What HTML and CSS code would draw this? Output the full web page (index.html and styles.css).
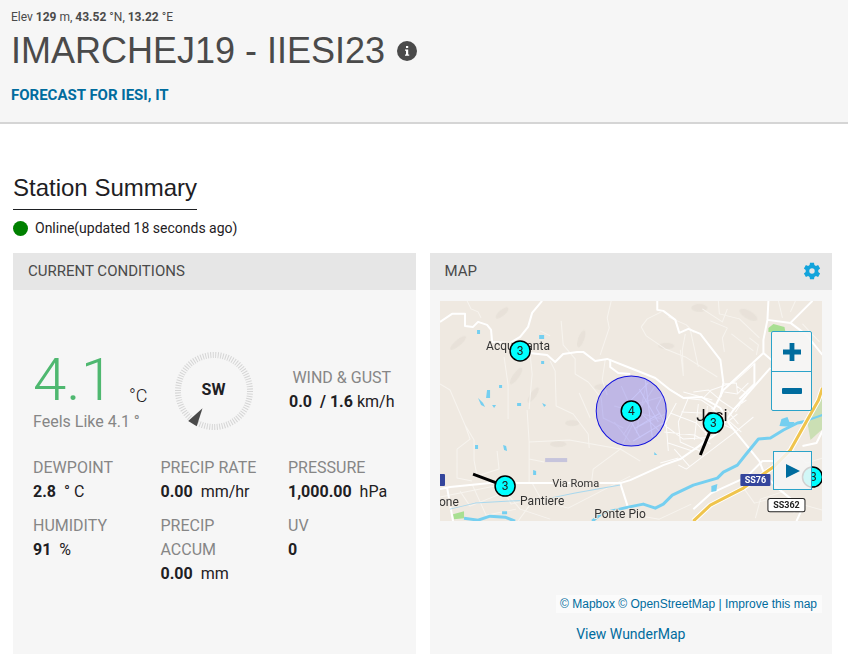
FILE: index.html
```html
<!DOCTYPE html>
<html lang="en">
<head>
<meta charset="utf-8">
<meta name="viewport" content="width=device-width, initial-scale=1">
<title>IMARCHEJ19 - IIESI23</title>
<link rel="stylesheet" href="styles.css">
</head>
<body>
<header class="station-header">
  <p class="coords">Elev <b>129</b> m, <b>43.52</b> °N, <b>13.22</b> °E</p>
  <div class="title-row">
    <h1>IMARCHEJ19 - IIESI23</h1>
    <button class="info" type="button" aria-label="Station information">
      <svg viewBox="0 0 20 20" width="20" height="20"><circle cx="10" cy="10" r="10" fill="#4a4a4a"/><path d="M9 5h2.200v2H9zM8 8.400h3.200v5h1v1.400H8v-1.400h1V9.800H8z" fill="#fff"/></svg>
    </button>
  </div>
  <a class="forecast" href="#">FORECAST FOR IESI, IT</a>
</header>
<main>
  <h2>Station Summary</h2>
  <p class="status"><span class="dot"></span>Online(updated 18 seconds ago)</p>
  <div class="panels">
    <section class="panel">
      <header class="panel-head"><h3>CURRENT CONDITIONS</h3></header>
      <div class="conditions">
        <div class="now">
          <div class="reading"><span class="temp">4.1</span><span class="unit">°C</span></div>
          <p class="feels">Feels Like 4.1 °</p>
        </div>
        <div class="compass">
          <svg viewBox="-40 -40 80 80" width="80" height="80">
            <circle r="36" fill="none" stroke="#d5d5d5" stroke-width="6" pathLength="180" stroke-dasharray="0.8 1.2"/>
            <path d="M-11.5 17.3L-25.8 30L-17.3 35.2Z" fill="#4a4a4a"/>
          </svg>
          <b class="direction">SW</b>
        </div>
        <div class="wind">
          <div class="label">WIND &amp; GUST</div>
          <div class="value"><b>0.0 &nbsp;/ 1.6</b> km/h</div>
        </div>
        <div class="metric"><div class="label">DEWPOINT</div><div class="value"><b>2.8</b> &nbsp;° C</div></div>
        <div class="metric"><div class="label">PRECIP RATE</div><div class="value"><b>0.00</b> &nbsp;mm/hr</div></div>
        <div class="metric"><div class="label">PRESSURE</div><div class="value"><b>1,000.00</b> &nbsp;hPa</div></div>
        <div class="metric"><div class="label">HUMIDITY</div><div class="value"><b>91</b> &nbsp;%</div></div>
        <div class="metric"><div class="label narrow">PRECIP ACCUM</div><div class="value"><b>0.00</b> &nbsp;mm</div></div>
        <div class="metric"><div class="label">UV</div><div class="value"><b>0</b></div></div>
      </div>
    </section>
    <section class="panel">
      <header class="panel-head">
        <h3>MAP</h3>
        <button class="gear" type="button" aria-label="Map settings">
          <svg viewBox="0 0 18 18" width="18" height="18"><path fill="#12a4dc" fill-rule="evenodd" d="M6.600 3L7 .8h4l.4 2.200 1.500.9 2.200-.8 2 3.400-1.800 1.400v2.200l1.800 1.400-2 3.400-2.200-.8-1.500.9-.4 2.200H7l-.4-2.200-1.500-.9-2.200.8-2-3.400 1.800-1.400V7.900L.9 6.500l2-3.400 2.200.8zM9 6.300a2.700 2.700 0 1 0 0 5.400 2.700 2.700 0 0 0 0-5.400z"/></svg>
        </button>
      </header>
      <div class="map-body">
        <div class="map">
          <svg class="map-art" viewBox="0 0 382 220" preserveAspectRatio="xMidYMid slice">
            <rect width="382" height="220" fill="#efe9e1"/>
            <g class="hills">
              <ellipse cx="62" cy="12" rx="8" ry="3" transform="rotate(-40 62 12)"/><ellipse cx="18" cy="42" rx="10" ry="3" transform="rotate(-40 18 42)"/><ellipse cx="76" cy="75" rx="10" ry="3" transform="rotate(-55 76 75)"/><ellipse cx="93" cy="94" rx="9" ry="3" transform="rotate(-55 93 94)"/><ellipse cx="141" cy="38" rx="9" ry="3" transform="rotate(-70 141 38)"/><ellipse cx="132" cy="122" rx="7" ry="3"/><ellipse cx="118" cy="143" rx="8" ry="3"/><ellipse cx="162" cy="86" rx="8" ry="3"/><ellipse cx="308" cy="14" rx="10" ry="4" transform="rotate(30 308 14)"/><ellipse cx="259" cy="7" rx="8" ry="4"/><ellipse cx="226" cy="45" rx="8" ry="3"/>
            </g>
            <path fill="#cbdfb4" d="M382 95L367 122L370 139L382 128Z"/>
            <path fill="#a8df92" d="M328 27L333 23L344 26L345 31H328ZM13 213L24 210V217L14 218Z"/>
            <path fill="#c6c4dc" d="M105 157H127V161H105Z"/>
            <g class="minor">
              <path d="M27 0l4 8 7 3 3 6M64 56l4 28v34M90 53l2 20-3 35M110 60l5 10 1 35 17 8 15 20 1 14M121 20l2 24 12 14v15l13 8 13 16 2 20 20 10M171 0l-4 17 2 10-9 27M165 59l-3 20 5 15M0 83l10 6 15 35 5 14-13 10v29l15 3M25 124l9 15v20l3 16M37 175l22-7-2-18M87 109l2 32 40-2 51 9 20 12M89 141v40M89 158l15 3M180 148l-27 20-2 16M150 117l-11-25M180 148l20-40M100 30l10 5"/>
              <path d="M201 26l6-8 14-7M201 26l5 9 19 13 20 8 32 20M228 16l18 8 8 8M240 49l3 26M245 33l-3 16 1 26M250 29l8 37M262 8l20 13 5-13M278 0l1 13 20 5 20 19M287 27l-5 10 2 14M291 33l22 17M309 37l9 7-2 10M270 20l17 7M355 0l-5 11M362 23l17 18M338 0l4 17M190 141l-16-20M181 85l18 40 26-12M174 105l47 13M183 134l31-48M190 105l34-10M206 82l-10 50"/>
              <path d="M0 196l60-12 20 24 30 10M20 190l10 15 45-18M32 183l14 31 30-6M59 182l12 21 26-7M92 182l10 18 26 7 62-32M78 220l13-18 15-2M190 213l29 5 32-15M315 217l5-19 24-8M353 212l11-8 18 5M304 188l10 14 19-5M344 68l14 9 6 21M349 145l17 17 16-5"/>
            </g>
            <g class="streets">
              <path d="M223 93l-7 14 10 17 2 26M230 89l14 8 17 2 12 8M230 112l26 10 11 12-4 12M236 102l-12 22 19 14 30-2M248 97l-10 24 2 20 22 10M253 91l15-2 12 10M241 111l40 2 20 18M258 103l-4 36M267 105l-2 29M224 131l30 3 16 9M228 142l24 8 17-15M243 91l29 8M284 91l13 2 11-11M296 85l11 8-12 18M278 98l15 10 13-9M271 107l16 14 10-8M276 127l12-9M263 97l8-8 23-8 21-19M273 119l22 10M285 107l13 16M238 164l8 4 50-38 17-14M220 162l18-5M234 148l15 17M282 83l14-1 1 10"/>
              <path d="M190 119l10 18M190 100l18-18M205 78l7 58M194 128l26-16M193 140l30-18M198 109l22 22M199 88l19 33"/>
            </g>
            <g class="roads">
              <path d="M0 21L12 13H25V25L33 26L38 21L47 24L51 29L52 41L70 42L80 36L88 26L92 12L102 0"/>
              <path d="M80 51L107 54L115 61L123 53L137 51H143L155 60L167 58L190 67L215 77L230 89L243 97L261 96L280 107L289 123L319 160L324 173L336 186L352 199L350 206L361 209L356 220"/>
              <path d="M170 58V66L178 72L190 73M217 0V9L223 10L235 19L239 32L248 28L260 33L280 59L283 82L280 96"/>
              <path d="M328 0L327 19L323 39V52L283 89L273 109M327 19L350 22L372 0M350 22L366 34L382 54M323 52L331 59M330 67L293 109L276 133L240 158L223 164L190 179L180 182H50L10 186L0 188M7 186L13 220M180 182L188 207"/>
              <path d="M314 63V83L299 98M253 208L271 192L306 176L322 160L334 160M362 145L376 142L382 130"/>
            </g>
            <g class="stream"><path d="M10 208L35 202L70 200L100 199L135 192L180 184"/></g>
            <path class="river" d="M24 217L38 219L50 215L65 216L75 220M152 220L162 212L188 206L203 203L215 207L223 203L232 194L253 184L277 177L283 171L297 164L305 154L318 138L330 137L343 129L357 122L367 120"/>
            <path d="M365 120L382 114" fill="none" stroke="#75cff0" stroke-width="2"/>
            <path fill="#75cff0" d="M341 118l6-2 2 5 5 0-2 5-13-1zM271 185l6-2-1 7-5 1zM37 29h3v4h-3zM99 34h5v4h-5zM101 60h3v3h-3zM59 84h3v3h-3zM47 89h3v8h-4zM38 97l5 5 2 4-4-2zM52 104l4 0-2 3zM77 102h4v3h-4zM102 102l4 2-2 2zM35 144h3v4h-3zM63 144l3 1 1 5-3-1zM93 169l3 1v4h-3zM62 210h5v3h-5zM214 151l3 3h-3z"/>
            <path class="highway-edge" d="M253 220L270 204L303 187L333 166L350 149L378 99L382 87"/>
            <path class="highway" d="M253 220L270 204L303 187L333 166L350 149L378 99L382 87"/>
            <circle cx="191" cy="110" r="35" fill="rgba(80,70,240,.3)" stroke="#1111dd" stroke-width="1"/>
            <g class="places">
              <text x="46" y="49" font-size="12">Acquasanta</text>
              <text x="112" y="186" font-size="11">Via Roma</text>
              <text x="80" y="204" font-size="12">Pantiere</text>
              <text x="154" y="217" font-size="12">Ponte Pio</text>
              <text x="-1" y="205" font-size="12">one</text>
              <text class="city" x="256" y="120" font-size="17">Jesi</text>
            </g>
            <path d="M33 173L65 185M273 122L260 154" stroke="#000" stroke-width="3"/>
            <g class="shields">
              <rect x="-8" y="173" width="13" height="12" rx="1" fill="#34459c"/>
              <rect x="300" y="173" width="30" height="12" rx="1" fill="#34459c"/><text x="315" y="182" fill="#fff">SS76</text>
              <rect x="327.500" y="197.500" width="37" height="13" rx="2" fill="#fff" stroke="#222"/><text x="346" y="207" fill="#222">SS362</text>
            </g>
            <g class="markers">
              <circle cx="80" cy="50" r="10"/><text x="80" y="54">3</text>
              <circle cx="191" cy="110" r="10"/><text x="191" y="114">4</text>
              <circle cx="273" cy="122" r="10"/><text x="273" y="126">3</text>
              <circle cx="65" cy="185" r="10"/><text x="65" y="189">3</text>
              <circle cx="372" cy="176" r="10"/><text x="373" y="180">3</text>
            </g>
          </svg>
          <div class="controls">
            <div class="zoom">
              <button type="button" aria-label="Zoom in"><svg viewBox="0 0 20 20" width="20" height="20"><path d="M7.600 1h4.800v6.600H19v4.800h-6.600V19H7.600v-6.600H1V7.600h6.600z"/></svg></button>
              <button type="button" aria-label="Zoom out"><svg viewBox="0 0 20 20" width="20" height="20"><rect x="0" y="7" width="20" height="6" rx="1"/></svg></button>
            </div>
            <button class="play" type="button" aria-label="Play"><svg viewBox="0 0 14 16" width="14" height="16"><path d="M0 1L14 8L0 15Z"/></svg></button>
          </div>
        </div>
        <div class="credits"><a href="#">© Mapbox</a> <a href="#">© OpenStreetMap</a> <span>|</span> <a href="#">Improve this map</a></div>
        <a class="wundermap" href="#">View WunderMap</a>
      </div>
    </section>
  </div>
</main>
</body>
</html>
```
FILE: styles.css
```css
* { box-sizing: border-box; }
body { margin: 0; min-height: 100vh; display: flex; flex-direction: column; background: #fff; color: #1e2023; font-family: Roboto, sans-serif; font-size: 16px; line-height: 24px; }
h1, h2, h3, p { margin: 0; font-weight: 400; }
b { font-weight: 700; }
a { color: #006c9e; text-decoration: none; }
button { padding: 0; border: 0; background: none; cursor: pointer; }
button svg { display: block; }

.station-header { padding: 9px 11px 15px; background: #f6f6f6; border-bottom: 2px solid #d5d5d5; color: #4a4a4a; }
.coords { font-size: 12px; line-height: 16px; }
.title-row { display: flex; align-items: center; gap: 12px; }
h1 { font-family: "Liberation Sans", Arial, sans-serif; font-size: 36px; line-height: 52px; }
.forecast { display: block; margin-top: 6px; font-size: 15px; font-weight: 700; }

main { flex: 1; display: flex; flex-direction: column; padding: 50px 16px 0 13px; }
h2 { align-self: flex-start; font-family: "Liberation Sans", Arial, sans-serif; font-size: 24px; line-height: 28px; padding-bottom: 7px; border-bottom: 1px solid #1e2023; }
.status { display: flex; align-items: center; gap: 7px; margin-top: 6px; font-size: 14px; }
.dot { width: 15px; height: 15px; border-radius: 50%; background: #008000; }
.panels { flex: 1; display: grid; grid-template-columns: 1fr 1fr; gap: 14px; margin-top: 13px; }
.panel { background: #f6f6f6; }
.panel-head { display: flex; align-items: center; justify-content: space-between; height: 37px; padding: 0 11px 2px 15px; background: #e6e6e6; }
h3 { font-size: 15px; color: #4a4a4a; }

.conditions { display: grid; grid-template-columns: repeat(3, 1fr); row-gap: 10px; padding: 61px 0 0 20px; }
.now, .compass, .wind { height: 95px; }
.reading { display: flex; align-items: flex-end; justify-content: space-between; height: 59px; padding-right: 13px; }
.temp { font-size: 60px; line-height: 60px; font-weight: 300; color: #4fb870; }
.unit { padding-bottom: 2px; font-size: 18px; font-weight: 300; }
.feels, .label { color: #868686; }
.compass { display: grid; place-items: start; padding-left: 13px; }
.compass > * { grid-area: 1 / 1; }
.direction { width: 80px; line-height: 78px; text-align: center; }
.wind { padding: 15px 20px 0 0; text-align: center; white-space: nowrap; }
.narrow { width: 80px; }
.value { white-space: nowrap; }

.map-body { display: flex; flex-direction: column; padding: 11px 10px 8px; }
.map { position: relative; height: 220px; overflow: hidden; }
.map-art { display: block; width: 100%; height: 100%; }
.hills { fill: #e3ddd4; opacity: .6; }
.minor, .streets, .roads, .stream, .river, .highway, .highway-edge { fill: none; stroke-linejoin: round; }
.minor { stroke: #f7f4ef; stroke-width: 1; }
.streets { stroke: #fff; stroke-width: 1; opacity: .85; }
.roads { stroke: #fff; stroke-width: 2; }
.stream { stroke: #a9d8ee; stroke-width: 1; }
.river { stroke: #75cff0; stroke-width: 3; }
.highway-edge { stroke: #fff; stroke-width: 5; }
.highway { stroke: #efc44d; stroke-width: 3; }
.places { fill: #333; stroke: #efe9e1; stroke-width: 2; paint-order: stroke; }
.places .city { fill: #111; }
.shields text { font-size: 9px; font-weight: 700; text-anchor: middle; }
.markers circle { fill: #00ffff; stroke: #000; stroke-width: 1.5; }
.markers text { font-size: 12px; text-anchor: middle; fill: #222; }
.controls { position: absolute; top: 30px; right: 10px; display: flex; flex-direction: column; align-items: flex-end; gap: 40px; }
.zoom { border: 1px solid #2ba3c9; border-radius: 2px; background: rgba(246, 246, 246, .9); }
.zoom button, .play { display: grid; place-items: center; width: 39px; height: 39px; fill: #006c9e; }
.zoom button + button { border-top: 1px solid #2ba3c9; }
.play { border: 1px solid #2ba3c9; background: rgba(246, 246, 246, .85); }
.credits { align-self: flex-end; margin-top: 74px; padding: 0 5px 0 4px; background: rgba(255, 255, 255, .5); color: #006c9e; font-family: "Liberation Sans", Arial, sans-serif; font-size: 12px; line-height: 18px; }
.wundermap { align-self: center; margin-top: 9px; font-size: 14px; }
```
